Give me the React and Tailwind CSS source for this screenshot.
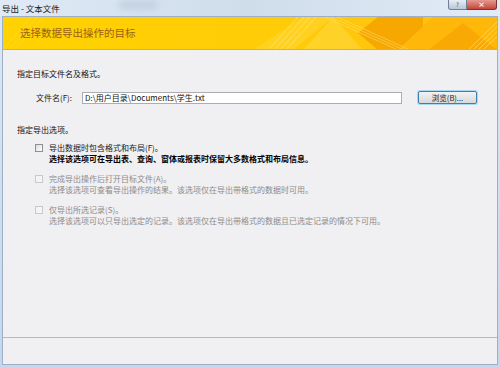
import React from 'react';

const font = { fontFamily: '"Noto Sans CJK SC", "Noto Sans", sans-serif' };

const options = [
  {
    label: '导出数据时包含格式和布局(F)。',
    hint: '选择该选项可在导出表、查询、窗体或报表时保留大多数格式和布局信息。',
    enabled: true,
  },
  {
    label: '完成导出操作后打开目标文件(A)。',
    hint: '选择该选项可查看导出操作的结果。该选项仅在导出带格式的数据时可用。',
    enabled: false,
  },
  {
    label: '仅导出所选记录(S)。',
    hint: '选择该选项可以只导出选定的记录。该选项仅在导出带格式的数据且已选定记录的情况下可用。',
    enabled: false,
  },
];

const BannerArt = () => (
  <svg className="absolute inset-0" width="494" height="33" viewBox="0 0 494 33">
    <defs>
      <linearGradient id="bg" x1="0" x2="1" y1="0" y2="0">
        <stop offset="0" stopColor="#ffd200" />
        <stop offset="0.55" stopColor="#ffcc08" />
        <stop offset="1" stopColor="#ffbe10" />
      </linearGradient>
    </defs>
    <rect width="494" height="33" fill="url(#bg)" />
    <polygon points="250,33 300,0 330,0 290,33" fill="#ffd630" opacity="0.6" />
    <polygon points="300,33 330,0 360,33" fill="#ffdb45" opacity="0.5" />
    <polygon points="355,16 375,0 420,0 420,33 375,33" fill="#f6a800" />
    <polygon points="395,33 430,0 494,0 494,33" fill="#ffb80a" />
    <polygon points="425,33 460,6 494,33" fill="#f7a300" opacity="0.7" />
    {[0, 6, 12, 18].map((o) => (
      <line key={o} x1={265 + o} y1="33" x2={295 + o} y2="0" stroke="#ffe680" strokeWidth="0.8" opacity="0.8" />
    ))}
    {[0, 6, 12].map((o) => (
      <line key={o} x1={395 + o} y1="33" x2={300 + o} y2="-10" stroke="#ffe680" strokeWidth="0.8" opacity="0.6" />
    ))}
    {[0, 5, 10, 15].map((o) => (
      <line key={o} x1={465 + o} y1="33" x2={494 + o} y2="5" stroke="#ffe27a" strokeWidth="0.8" opacity="0.8" />
    ))}
    {[0, 6, 12].map((o) => (
      <line key={o} x1={0 + o} y1="33" x2={28 + o} y2="0" stroke="#ffe35a" strokeWidth="0.8" opacity="0.5" />
    ))}
  </svg>
);

const Checkbox = ({ enabled }) => (
  <span
    className={`mt-[1.5px] h-[8px] w-[8px] shrink-0 border ${
      enabled ? 'border-[#8e8f8f] bg-gradient-to-br from-[#dcdcdc] to-[#ffffff]' : 'border-[#c9c9c9] bg-[#f4f4f4]'
    }`}
  />
);

export default function App() {
  return (
    <div
      className="relative flex h-[367px] w-[500px] flex-col overflow-hidden bg-gradient-to-b from-[#dbe8f6] to-[#c4d7ec]"
      style={font}
    >
      <div className="relative flex h-[16px] shrink-0 items-center bg-gradient-to-r from-[#dfeaf6] via-[#cfdcea] to-[#e2ecf7] px-[2px]">
        <span className="text-[8.5px] leading-none text-[#1b1b1b]">导出 - 文本文件</span>
        <div className="absolute left-[118px] top-0 h-[10px] w-[40px] rounded-full bg-[#b9c8d8] opacity-60 blur-[3px]" />
        <div className="absolute right-[3px] top-0 flex h-[10px]">
          <div className="flex w-[19px] items-center justify-center rounded-bl-[3px] border border-t-0 border-[#6f7f96] bg-gradient-to-b from-[#e9eef5] to-[#b9c6d6] text-[6px] leading-none text-[#3a4656]">
            ?
          </div>
          <div className="flex w-[30px] items-center justify-center rounded-br-[3px] border border-l-0 border-t-0 border-[#7a3530] bg-gradient-to-b from-[#e49a8f] to-[#c4443a] text-[7px] font-bold leading-none text-white">
            ×
          </div>
        </div>
      </div>

      <div className="mx-[2px] mb-[2px] flex flex-1 flex-col border border-[#9fb0c6] bg-[#f0eff1]">
        <div className="relative h-[33px] shrink-0 overflow-hidden border-b border-[#e7b400]">
          <BannerArt />
          <span className="absolute left-[17px] top-[11px] text-[10.5px] leading-none text-[#9a6114]">
            选择数据导出操作的目标
          </span>
        </div>

        <div className="flex flex-1 flex-col">
          <div className="flex flex-col pl-[14px] pr-[20px] text-[8px] leading-[11px] text-[#111]">
            <div className="mt-[18px]">指定目标文件名及格式。</div>

            <div className="mt-[12px] flex items-center pl-[19px]">
              <span className="w-[46px] text-[#222]">文件名(F):</span>
              <div className="flex h-[12px] w-[320px] items-center border border-[#abadb3] bg-white pl-[2px] text-[8px] text-[#111]" style={{ fontFamily: '"Noto Sans CJK SC", "DejaVu Sans Mono", monospace' }}>
                D:\用户目录\Documents\学生.txt
              </div>
              <div className="ml-[16px] flex h-[13px] w-[59px] items-center justify-center rounded-[2px] border border-[#3c7fb1] bg-gradient-to-b from-[#f2f2f2] to-[#d9d9d9] text-[7.5px] text-[#222] shadow-[0_0_0_1px_#a9d8f5]">
                浏览(B)...
              </div>
            </div>

            <div className="mt-[20px]">指定导出选项。</div>

            <div className="mt-[7px] flex flex-col gap-[9px] pl-[18px]">
              {options.map((o) => (
                <div key={o.label} className="flex gap-[6px]">
                  <Checkbox enabled={o.enabled} />
                  <div className="flex flex-col">
                    <span className={o.enabled ? 'text-[#1a1a1a]' : 'text-[#8c8c8c]'}>{o.label}</span>
                    <span className={o.enabled ? 'font-bold text-black' : 'text-[#8c8c8c]'}>{o.hint}</span>
                  </div>
                </div>
              ))}
            </div>
          </div>

          <div className="mt-auto h-[27px] border-t border-[#b9b9b9]" />
        </div>
      </div>
    </div>
  );
}
